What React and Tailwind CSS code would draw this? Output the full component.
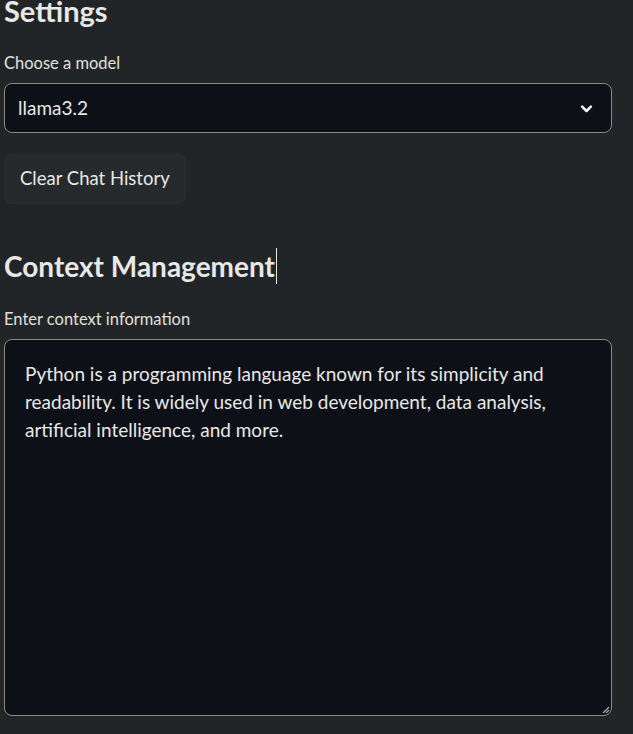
import React from "react";

const Chevron = () => (
  <svg width="15" height="15" viewBox="0 0 24 24" fill="none" stroke="#fafafa" strokeWidth="4" strokeLinecap="round" strokeLinejoin="round">
    <path d="M5 9l7 7 7-7" />
  </svg>
);

export default function App() {
  return (
    <div className="w-[633px] h-[734px] overflow-hidden bg-[#222527] text-[#e8e8e6] font-['Lato','Noto_Sans',sans-serif]">
      <div className="pl-[4px] pr-[21px]">
        <h2 className="text-[29px] font-bold leading-[34px] -mt-[6px]">Settings</h2>

        <label className="block mt-[25px] text-[16.5px] leading-[20px] text-[#e0e0dc]">Choose a model</label>
        <div className="mt-[10px] h-[50px] rounded-[8px] border border-[#8e8a7d] bg-[#0d1016] flex items-center justify-between pl-[13px] pr-[17px]">
          <span className="text-[19px]">llama3.2</span>
          <Chevron />
        </div>

        <button className="mt-[21px] h-[50px] w-[182px] rounded-[8px] bg-[#262a2c] border border-[#2a2d2f] text-[18.5px] text-left pl-[15px]">
          Clear Chat History
        </button>

        <div className="mt-[43px] flex items-center h-[38px]">
          <h2 className="text-[28px] font-bold leading-[38px]">Context Management</h2>
          <span className="w-px h-[36px] bg-[#e8e8e6] ml-[1px]" />
        </div>

        <label className="block mt-[24px] text-[16.5px] leading-[20px] text-[#e0e0dc]">Enter context information</label>
        <div className="relative mt-[10px] h-[377px] rounded-[8px] border border-[#8e8a7d] bg-[#0d1016] px-[20px] pt-[20px]">
          <p className="text-[19px] leading-[28px]">
            Python is a programming language known for its simplicity and readability. It is widely used in web development, data analysis, artificial intelligence, and more.
          </p>
          <svg className="absolute right-[1px] bottom-[1px]" width="10" height="10" viewBox="0 0 10 10">
            <path d="M9 3L3 9M9 6L6 9" stroke="#9a9a9a" strokeWidth="1.5" />
          </svg>
        </div>
      </div>
    </div>
  );
}
